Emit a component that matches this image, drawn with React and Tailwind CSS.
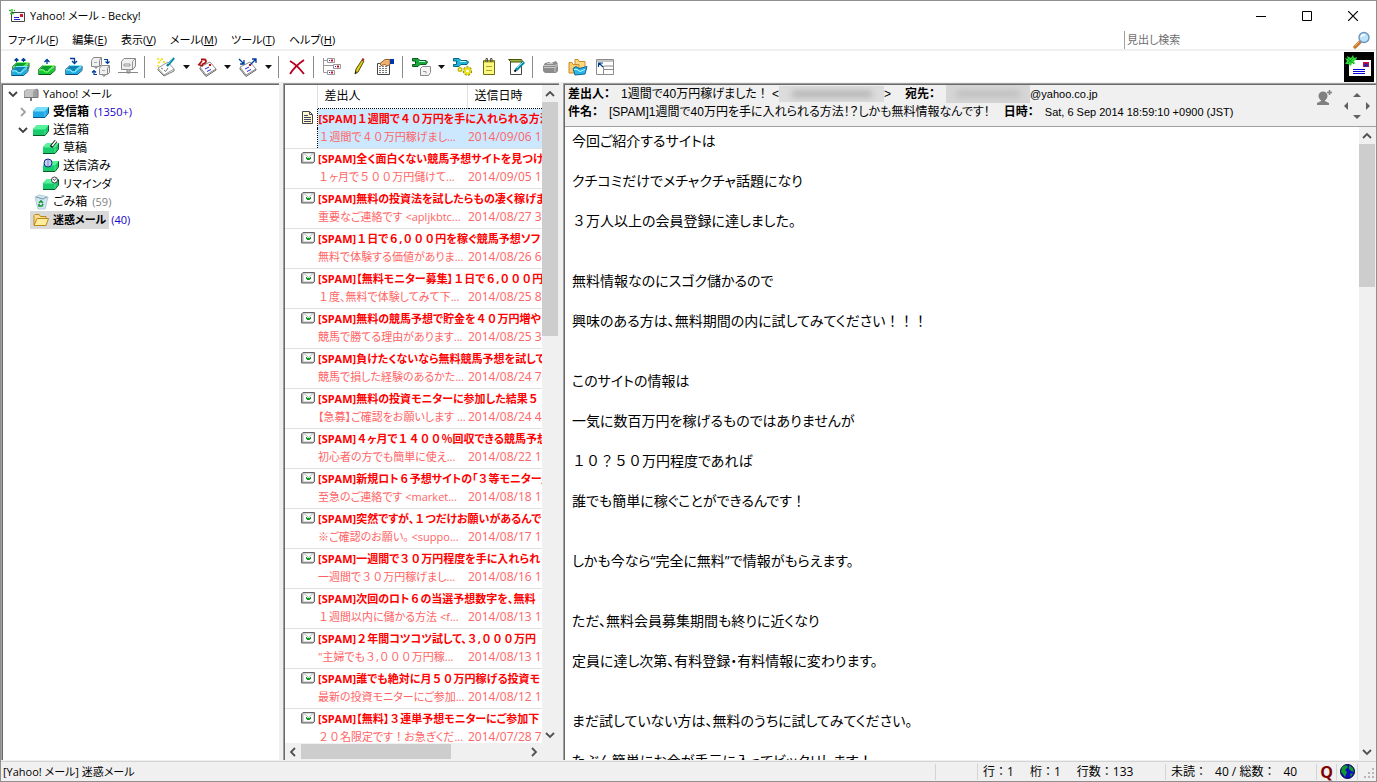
import React, { useState } from "react";

const folders = [
    { name: "Yahoo! メール", level: 0, icon: "mailbox", open: true },
    { name: "受信箱", level: 1, icon: "inbox", open: false, bold: true, count: "(1350+)" },
    { name: "送信箱", level: 1, icon: "outbox", open: true },
    { name: "草稿", level: 2, icon: "draft" },
    { name: "送信済み", level: 2, icon: "sent" },
    { name: "リマインダ", level: 2, icon: "reminder" },
    { name: "ごみ箱", level: 1, icon: "trash", count: "(59)", dim: true },
    { name: "迷惑メール", level: 1, icon: "folder", bold: true, count: "(40)" },
];

const mails = [
    { subject: "[SPAM]１週間で４０万円を手に入れられる方法", from: "１週間で４０万円稼げまし...", date: "2014/09/06 18:59" },
    { subject: "[SPAM]全く面白くない競馬予想サイトを見つけ", from: "１ヶ月で５００万円儲けて...", date: "2014/09/05 12:10" },
    { subject: "[SPAM]無料の投資法を試したらもの凄く稼げま", from: "重要なご連絡です <apljkbtc...", date: "2014/08/27 3:20" },
    { subject: "[SPAM]１日で６,０００円を稼ぐ競馬予想ソフト", from: "無料で体験する価値がありま...", date: "2014/08/26 6:41" },
    { subject: "[SPAM]【無料モニター募集】１日で６,０００円", from: "１度、無料で体験してみて下...", date: "2014/08/25 8:15" },
    { subject: "[SPAM]無料の競馬予想で貯金を４０万円増や", from: "競馬で勝てる理由があります...", date: "2014/08/25 3:02" },
    { subject: "[SPAM]負けたくないなら無料競馬予想を試して", from: "競馬で損した経験のあるかた...", date: "2014/08/24 7:33" },
    { subject: "[SPAM]無料の投資モニターに参加した結果５", from: "【急募】ご確認をお願いします ...", date: "2014/08/24 4:18" },
    { subject: "[SPAM]４ヶ月で１４００％回収できる競馬予想", from: "初心者の方でも簡単に使え...", date: "2014/08/22 10:27" },
    { subject: "[SPAM]新規ロト６予想サイトの「３等モニター」", from: "至急のご連絡です <market...", date: "2014/08/18 11:05" },
    { subject: "[SPAM]突然ですが、１つだけお願いがあるんで", from: "※ご確認のお願い。 <suppo...", date: "2014/08/17 11:48" },
    { subject: "[SPAM]一週間で３０万円程度を手に入れられ", from: "一週間で３０万円稼げまし...", date: "2014/08/16 19:30" },
    { subject: "[SPAM]次回のロト６の当選予想数字を、無料", from: "１週間以内に儲かる方法 <f...", date: "2014/08/13 15:12" },
    { subject: "[SPAM]２年間コツコツ試して、３,０００万円", from: "\"主婦でも３,０００万円稼...", date: "2014/08/13 12:09" },
    { subject: "[SPAM]誰でも絶対に月５０万円稼げる投資モ", from: "最新の投資モニターにご参加...", date: "2014/08/12 19:55" },
    { subject: "[SPAM]【無料】３連単予想モニターにご参加下", from: "２０名限定です！お急ぎくだ...", date: "2014/07/28 7:21" },
];

const bodyLines = [
    "今回ご紹介するサイトは", "",
    "クチコミだけでメチャクチャ話題になり", "",
    "３万人以上の会員登録に達しました。", "", "",
    "無料情報なのにスゴク儲かるので", "",
    "興味のある方は、無料期間の内に試してみてください！！！", "", "",
    "このサイトの情報は", "",
    "一気に数百万円を稼げるものではありませんが", "",
    "１０？５０万円程度であれば", "",
    "誰でも簡単に稼ぐことができるんです！", "", "",
    "しかも今なら“完全に無料”で情報がもらえます。", "", "",
    "ただ、無料会員募集期間も終りに近くなり", "",
    "定員に達し次第、有料登録・有料情報に変わります。", "", "",
    "まだ試していない方は、無料のうちに試してみてください。", "",
    "たぶん簡単にお金が手元に入ってビックリします！",
];

const menus = [
    ["ファイル", "F"], ["編集", "E"], ["表示", "V"], ["メール", "M"], ["ツール", "T"], ["ヘルプ", "H"],
];

// kana is set proportionally, but full-width digits and marks keep their full cell
const Jp = ({ text }) =>
    text.split(/([０-９！？：％]+)/).map((part, i) =>
        i % 2 ? <span key={i} className="[font-feature-settings:normal]">{part}</span> : part
    );

/* ---------- icons ---------- */

const Svg = ({ w = 20, h = 20, children }) => (
    <svg width={w} height={h} viewBox={`0 0 ${w} ${h}`} fill="none" className="shrink-0" aria-hidden="true">
        {children}
    </svg>
);

// open tray, used by the send and receive buttons
const Tray = ({ x = 0, y = 0, light, mid, inner, dark }) => (
    <g transform={`translate(${x} ${y})`}>
        <path d="M1 5.5 5 1.5H16.5L11 5.5 10 7.5H7L5.5 5.5Z" fill={inner} stroke={light} />
        <path d="M1 5.5H5.5L7 7.5H10L11.5 5.5 16.5 2V6L12.5 10.5H1Z" fill={mid} />
        <path d="M1 6H5L7 8H10L12 6 16 3" stroke={light} />
        <path d="M.5 10.5H12.5L17 6.5V2" stroke={dark} />
        <path d="M.5 10.5V5.5L5 1.5" stroke={dark} strokeWidth=".7" />
    </g>
);
const greenTray = { light: "#7cf86c", mid: "#14c838", inner: "#0c9c34", dark: "#045c10" };
const blueTray = { light: "#84e8fc", mid: "#20acdc", inner: "#1084b4", dark: "#045080" };

const Server = ({ x = 0, y = 0 }) => (
    <g transform={`translate(${x} ${y})`} stroke="#888">
        <path d="M.5 3.5 2.5 .5H10.5V7.5L8.5 9.5H.5Z" fill="#f0f0f0" />
        <path d="M8.5 9V3.5L10 1" />
        <path d="M3 5.5H6" stroke="#aaa" />
        <path d="M4 9V11H6V9" fill="#bbb" />
    </g>
);

const Letter = ({ x = 0, y = 0 }) => (
    <g transform={`translate(${x} ${y})`}>
        <path d="M1 6 11 1 17 8 7 14Z" fill="#fff" stroke="#8c8c8c" />
        <path d="M1 7V8L7 15.5 17 9V8" stroke="#666" />
        <path d="M6 8 10 6M8 10.5 12 8.5" stroke="#22d" />
        <path d="M10 4 12 4" stroke="#e00" strokeWidth="2" />
    </g>
);

const Wrench = ({ color, dark }) => (
    <g>
        <path d="M1.5 1.5H7L9 3.5H15L16.5 5 15 7.5H9L7 9.5H1.5V7.5H4.5V4H1.5Z" fill={color} stroke={dark} />
        <path d="M8 4.5H14" stroke="#bfe" />
    </g>
);

const icons = {
    checkAll: (
        <Svg>
            <Tray x={2} y={4} {...greenTray} /><Tray x={1} y={8} {...blueTray} />
            <path d="M6.5 5V1.5M4.5 3.5 6.5 1.5 8.5 3.5M13.5 5V1.5M11.5 3.5 13.5 1.5 15.5 3.5" stroke="#003c9c" strokeWidth="1.2" />
        </Svg>
    ),
    send: (
        <Svg><Tray x={1} y={7} {...greenTray} /><path d="M10 7V2.5M7.5 5 10 2.5 12.5 5" stroke="#003c9c" strokeWidth="1.3" /></Svg>
    ),
    receive: (
        <Svg><Tray x={1} y={7} {...blueTray} /><path d="M6 1.5H10.5V6M8 4 10.5 6.5 13 4" stroke="#003c9c" strokeWidth="1.3" /></Svg>
    ),
    transfer: (
        <Svg>
            <Server /><Server x={8} y={8} />
            <path d="M13 2.5H16.5V6M14.5 4.5 16.5 6.5 18.5 4.5M6 17.5H3V14M1 15.5 3 13.5 5 15.5" stroke="#003c9c" strokeWidth="1.2" />
        </Svg>
    ),
    server: (
        <Svg>
            <path d="M3.5 4.5 6 1.5H17.5V9L15 12.5H3.5Z" fill="#f0f0f0" stroke="#888" /><path d="M14.5 12V4.5L17 2M6 7H12V9H6Z" stroke="#999" />
            <path d="M9 12.5V16H12V12.5" fill="#bbb" stroke="#888" /><path d="M0 15.5H20" stroke="#888" />
        </Svg>
    ),
    compose: (
        <Svg>
            <path d="M2 11 12 5 18 12 8 18Z" fill="#fff" stroke="#999" /><path d="M2 12V13L8 19 18 14V12" stroke="#777" />
            <path d="M8 13 9.5 14.5 12 11M5 11 7 12" stroke="#777" />
            <path d="M18 1 11 9" stroke="#047ba0" strokeWidth="2.4" /><path d="M17 1 12 7" stroke="#6de" />
            <path d="M1 2H3M6 1V3M2 6 4 5M8 4V6M1 9H3M4 3 5 4" stroke="#f4e400" strokeWidth="1.6" />
        </Svg>
    ),
    reply: (
        <Svg>
            <Letter x={2} y={4} />
            <path d="M4 2.5H8Q10 4 8 6L5 7.5M5 4 2 7.5 6 9" stroke="#b01010" strokeWidth="1.8" />
        </Svg>
    ),
    forward: (
        <Svg>
            <Letter x={1} y={4} />
            <path d="M1 2 6 7M2 7H6V3M12 8 18 2M14 2H18V6" stroke="#003c9c" strokeWidth="1.3" />
        </Svg>
    ),
    remove: (
        <Svg><path d="M3 4Q10 8 17 17M17 3Q8 9 3 17" stroke="#b4001e" strokeWidth="1.8" /></Svg>
    ),
    thread: (
        <Svg>
            <path d="M1.5 1V15.5H6M2 8.5H11M2 3.5H5" stroke="#999" />
            <path d="M5.5 1.5H12.5V5.5H5.5ZM11.5 7.5H18.5V11.5H11.5ZM5.5 13.5H12.5V17.5H5.5Z" fill="#fff" stroke="#999" />
            <path d="M9 3.5H11M15 9.5H17M9 15.5H11" stroke="#e00020" strokeWidth="2" />
            <path d="M7 3.5H8M13 9.5H14M7 15.5H8" stroke="#22c" />
        </Svg>
    ),
    pencil: (
        <Svg>
            <path d="M6 17 7 12 13 3 15 4 9 15Z" fill="#e4d020" stroke="#554a00" /><path d="M13 2 15 3" stroke="#a03030" strokeWidth="2.4" />
            <path d="M6 17V14L8 15Z" fill="#222" />
        </Svg>
    ),
    properties: (
        <Svg>
            <path d="M1.5 6.5H13.5V17.5H1.5Z" fill="#fff" stroke="#444" />
            <path d="M3 9.5H12M3 11.5H12M3 13.5H12M3 15.5H12" stroke="#777" strokeDasharray="2 1" />
            <path d="M4 6.5 9 2.5H14V7.5L11 9 9 7.5 5 8.5Z" fill="#f0b070" stroke="#9a6430" /><path d="M14 2H18V7H14Z" fill="#0036a8" />
        </Svg>
    ),
    settings: (
        <Svg>
            <Wrench color="#18a838" dark="#065c18" />
            <path d="M9.5 11.5 11.5 9.5H19.5V15.5L17.5 18.5H9.5Z" fill="#f4f4f4" stroke="#888" /><path d="M12 14.5H15V16.5" stroke="#999" />
        </Svg>
    ),
    accountSettings: (
        <Svg>
            <Wrench color="#20b4dc" dark="#066484" />
            <circle cx="15.5" cy="14" r="3.5" stroke="#8e8600" strokeWidth="2.4" strokeDasharray="2 1" />
            <circle cx="15.5" cy="14" r="2.6" fill="#fff" stroke="#e6dc10" strokeWidth="2.2" />
            <circle cx="8" cy="12.5" r="1.7" stroke="#c4ba00" strokeWidth="1.6" />
        </Svg>
    ),
    notepad: (
        <Svg>
            <path d="M4.5 3.5H15.5V17.5H4.5Z" fill="#fff880" stroke="#6c6c10" /><path d="M5 4.5H15" stroke="#b0a820" strokeWidth="2" />
            <path d="M7 9.5H13M7 13.5H13" stroke="#a8a030" />
            <path d="M7 5V1.5H8.5V5M11.5 5V1.5H13V5" stroke="#555" />
        </Svg>
    ),
    edit: (
        <Svg>
            <path d="M4.5 4.5H15.5V17.5H4.5Z" fill="#fff" stroke="#444" /><path d="M2.5 2.5H15.5L17 5H5Z" fill="#9cb838" stroke="#445410" />
            <path d="M18 5 10 13" stroke="#0488a4" strokeWidth="2.8" /><path d="M17 5 11 11" stroke="#8ef" /><path d="M8.5 14.5 10 13" stroke="#000" strokeWidth="2" />
        </Svg>
    ),
    archive: (
        <Svg>
            <path d="M2 9 4 6 8 5 10 6 15 4 17 7V14L15 16H4L2 14Z" fill="#8c8c8c" />
            <path d="M2 8.5H14L17 7M6 6.5H12M3 10.5H14V15M14 10.5 17 8.5" stroke="#c8c8c8" />
        </Svg>
    ),
    folders: (
        <Svg>
            <path d="M7 2.5H10L11 4.5H17V12H7Z" fill="#ffd880" stroke="#c88c28" /><path d="M1 5.5H4L5 7.5H11V16H1Z" fill="#ffcc68" stroke="#c88c28" />
            <path d="M5 11.5 8 9.5 11 11.5 19 9.5 17 17 7 18Z" fill="#2cb4e4" stroke="#0868a0" /><path d="M6 12.5H9L12 14.5 17 12.5" stroke="#bff" />
        </Svg>
    ),
    layout: (
        <Svg>
            <path d="M1.5 2.5H18.5V17.5H1.5Z" fill="#fff" stroke="#8c8c8c" /><path d="M9 9H18M9 12.5H18M8.5 17V9" stroke="#8c8c8c" />
            <path d="M1 4H19" stroke="#8c8c8c" /><path d="M3.5 10V6H8M4 6 8 10" stroke="#003c8c" strokeWidth="1.2" />
        </Svg>
    ),
};

const FolderBox = ({ light, mid, dark, children }) => (
    <Svg w={16} h={16}>
        <path d="M0 7 4 3H16V8L12 13H0Z" fill={mid} />
        <path d="M0 7.5 4 3H16L12 7.5Z" fill={light} />
        <path d="M12 8V12.5" stroke={light} strokeWidth=".7" />
        <path d="M0 13.5H12L15.5 9V3.5" stroke={dark} />
        {children}
    </Svg>
);
const greenBox = { light: "#58f49c", mid: "#18cc6c", dark: "#055c28" };

const folderIcons = {
    mailbox: (
        <Svg w={16} h={16}>
            <path d="M1 5 4 3H14L15 5V11H1Z" fill="#a0a0a0" /><path d="M2 5 5 3H12L10 6V11H2Z" fill="#c4c4c4" />
            <path d="M1 11.5H15V4L13.5 3" stroke="#777" /><path d="M7 12H9V15H7Z" fill="#777" />
        </Svg>
    ),
    inbox: <FolderBox light="#78dcfc" mid="#20a8e4" dark="#085890" />,
    outbox: <FolderBox {...greenBox} />,
    draft: (
        <FolderBox {...greenBox}><path d="M13 1 8 7" stroke="#111" strokeWidth="3.2" /><path d="M13 1 9 6" stroke="#fff" strokeWidth="1.6" /></FolderBox>
    ),
    sent: (
        <FolderBox {...greenBox}>
            <circle cx="5" cy="5" r="4" fill="#fff" stroke="#0a2090" />
            <path d="M1 5H9M5 1V9M2 3H8M2 7H8" stroke="#4060c0" strokeWidth=".6" />
        </FolderBox>
    ),
    reminder: (
        <FolderBox {...greenBox}><circle cx="11.5" cy="4" r="3" fill="#fff" stroke="#444" /><path d="M10 3 11.5 4.5 13 2.5" stroke="#222" strokeWidth=".8" /></FolderBox>
    ),
    trash: (
        <Svg w={16} h={16}>
            <path d="M2 3 6 1 15 3 12 15H5Z" fill="#d0e6f0" stroke="#b0ccd8" /><path d="M3 3 10 5 14 3" stroke="#7894a4" />
            <path d="M6 9 8 7 10 9M10 10 9 12H6V10" stroke="#1c9438" strokeWidth="1.6" />
        </Svg>
    ),
    folder: (
        <Svg w={16} h={16}>
            <path d="M1 13V3.5L2 2.5H6L7.5 4.5H13V7" fill="#ffe08c" stroke="#b88818" />
            <path d="M1 13.5 4 6.5H15.5L13 13.5Z" fill="#ffec9c" stroke="#b88818" />
        </Svg>
    ),
};

const AppIcon = () => (
    <Svg w={16} h={14}>
        <path d="M2.5 3.5H15.5V12.5H2.5Z" fill="#fff" stroke="#444" />
        <path d="M5 8.5H10M5 10.5H11" stroke="#22c" /><path d="M11 5H14V8H11Z" fill="#e01030" />
        <path d="M0 1.5H2M3 0V3M5 1.5H6M1 4.5H5" stroke="#30c030" strokeWidth="1.4" />
    </Svg>
);

const LogoIcon = () => (
    <Svg w={30} h={30}>
        <path d="M0 0H30V30H0Z" fill="#000" />
        <path d="M5 8H27V24H5Z" fill="#fff" />
        <path d="M9 17.5H21M9 19.5H21M9 21.5H21" stroke="#00d" />
        <path d="M19 10H25V15H19Z" fill="#d01028" /><path d="M20 14 22 11 24 14Z" fill="#22c" stroke="#22c" />
        <path d="M1 6 4 7 3 4 7 6 9 3 10 6 13 5 12 8 10 9 11 12 8 11 7 14 4 12 1 12 3 9Z" fill="#2ed838" />
        <path d="M3 6 10 12M4 11 9 6" stroke="#0c8c18" strokeWidth=".8" />
    </Svg>
);

const MailIcon = () => (
    <Svg w={14} h={12}>
        <path d="M.5 2 2 .5H13.5V9.5L12 11H.5Z" fill="#b0b0b0" stroke="#666" />
        <path d="M2.5 1.5H12.5V9.5H2.5Z" fill="#fff" />
        <path d="M3 1.5 7.5 5.5 12 1.5" stroke="#b4b4b4" /><path d="M5 5H6V6H9V5H10V7H9V8H6V7H5Z" fill="#0a9c20" />
    </Svg>
);

const PageIcon = () => (
    <Svg w={13} h={13}>
        <path d="M1.5 .5H8.5L11.5 3.5V12.5H1.5Z" fill="#fffbd0" stroke="#444" />
        <path d="M8.5 1V3.5H11M3 4.5H7M3 6.5H10M3 8.5H10M3 10.5H10" stroke="#446" />
    </Svg>
);

const chevrons = {
    up: "M1 7 5 3 9 7",
    down: "M1 3 5 7 9 3",
    left: "M7 1 3 5 7 9",
    right: "M3 1 7 5 3 9",
};
const Chevron = ({ dir, color = "#505050" }) => (
    <Svg w={10} h={10}><path d={chevrons[dir]} stroke={color} strokeWidth="1.8" /></Svg>
);

const Search = () => (
    <Svg w={18} h={18}>
        <path d="M2 16 7 11" stroke="#c47830" strokeWidth="3.4" strokeLinecap="round" />
        <path d="M2 15 6 11" stroke="#f0b470" strokeLinecap="round" />
        <circle cx="11" cy="6.5" r="5" fill="#bfe4fa" stroke="#6c94c0" strokeWidth="1.4" /><path d="M8 6Q9 3 12 4" stroke="#fff" strokeWidth="1.6" />
    </Svg>
);

/* ---------- parts ---------- */

const Pane = ({ className, children }) => (
    <div className={`border-t border-l border-[#a0a0a0] min-h-0 min-w-0 ${className}`}>
        <div className="h-full w-full flex flex-col border-t border-l border-[#696969] bg-white">{children}</div>
    </div>
);

const VScroll = ({ thumb }) => (
    <div className="w-[17px] shrink-0 flex flex-col bg-[#f0f0f0]">
        <button aria-label="上へ" className="h-[17px] w-4 flex items-center justify-center"><Chevron dir="up" /></button>
        <div className="flex-1 min-h-0"><div className={`w-4 bg-[#cdcdcd] ${thumb}`} /></div>
        <button aria-label="下へ" className="h-[17px] w-4 flex items-center justify-center"><Chevron dir="down" /></button>
    </div>
);

const Tool = ({ name, label, menu }) => (
    <div className="flex">
        <button aria-label={label} className="w-[27px] h-[28px] flex items-center justify-center hover:bg-[#e5f3ff]">{icons[name]}</button>
        {menu && (
            <button aria-label={`${label}メニュー`} className="w-[14px] flex items-center justify-center">
                <Svg w={7} h={4}><path d="M0 0H7L3.5 4Z" fill="#111" /></Svg>
            </button>
        )}
    </div>
);

const Divider = () => (
    <div className="w-2 h-[22px] pl-[3px]"><div className="w-px h-full bg-[#8c8c8c]" /></div>
);

const StatusCell = ({ className, children }) => (
    <div className={`flex items-center border-l border-[#d4d4d4] h-4 whitespace-pre ${className}`}>{children}</div>
);

export default function App() {
    const [selectedMail, setSelectedMail] = useState(0);
    const [selectedFolder, setSelectedFolder] = useState(7);

    return (
        <div className="h-screen flex flex-col overflow-hidden border border-[#8f8f8f] bg-white text-black text-[12px] leading-[18px] font-['Open_Sans','Noto_Sans_CJK_JP',sans-serif] [font-feature-settings:'palt']">
            {/* Title bar */}
            <header className="h-[30px] shrink-0 flex items-center pl-2">
                <AppIcon />
                <h1 className="pl-[5px] flex-1 text-[11px]">Yahoo! メール - Becky!</h1>
                <button aria-label="最小化" className="w-[46px] h-full flex items-center justify-center">
                    <Svg w={10} h={10}><path d="M0 5.5H10" stroke="#000" /></Svg>
                </button>
                <button aria-label="最大化" className="w-[46px] h-full flex items-center justify-center">
                    <Svg w={10} h={10}><path d="M.5 .5H9.5V9.5H.5Z" stroke="#000" /></Svg>
                </button>
                <button aria-label="閉じる" className="w-[46px] h-full flex items-center justify-center">
                    <Svg w={10} h={10}><path d="M0 0 10 10M10 0 0 10" stroke="#000" strokeWidth="1.2" /></Svg>
                </button>
            </header>

            {/* Menu bar */}
            <div className="h-[18px] shrink-0 flex items-center justify-between">
                <nav className="flex gap-[14px] pl-[7px] text-[11px]">
                    {menus.map(([name, key]) => (
                        <button key={key}>{name}(<span className="underline">{key}</span>)</button>
                    ))}
                </nav>
                <label className="w-[252px] h-full flex items-center border-l border-[#a0a0a0]">
                    <input
                        type="text"
                        aria-label="見出し検索"
                        placeholder="見出し検索"
                        className="flex-1 min-w-0 pl-[2px] text-[11px] outline-none placeholder:text-[#6d6d6d]"
                    />
                    <span className="pr-[5px]"><Search /></span>
                </label>
            </div>

            {/* Toolbar */}
            <div className="h-[33px] shrink-0 flex items-center border-t-2 border-[#f0f0f0] pl-[5px]">
                <Tool name="checkAll" label="送受信" />
                <Tool name="send" label="送信" />
                <Tool name="receive" label="受信" />
                <Tool name="transfer" label="全送受信" />
                <Tool name="server" label="リモート" />
                <Divider />
                <div className="flex pl-[3px]">
                    <Tool name="compose" label="新規作成" menu />
                    <Tool name="reply" label="返信" menu />
                    <Tool name="forward" label="転送" menu />
                </div>
                <Divider />
                <Tool name="remove" label="削除" />
                <Divider />
                <Tool name="thread" label="スレッド" />
                <Tool name="pencil" label="マーク" />
                <Tool name="properties" label="プロパティ" />
                <Divider />
                <Tool name="settings" label="設定" menu />
                <Tool name="accountSettings" label="全般設定" />
                <Tool name="notepad" label="メモ" />
                <Tool name="edit" label="編集" />
                <Divider />
                <Tool name="archive" label="アーカイブ" />
                <Tool name="folders" label="フォルダ" />
                <Tool name="layout" label="レイアウト" />
                <div className="flex-1 flex justify-end pr-[2px]"><LogoIcon /></div>
            </div>

            <main className="flex-1 min-h-0 flex gap-1 py-px bg-[#f0f0f0]">
                {/* Folder tree */}
                <Pane className="w-[278px] shrink-0">
                    <ul>
                        {folders.map((f, i) => (
                            <li
                                key={f.name}
                                className={`h-[18px] flex items-center ${f.level === 0 ? "pl-[3px]" : f.level === 1 ? "pl-[13px]" : "pl-[23px]"}`}
                            >
                                <span className="w-[14px] flex justify-center">
                                    {f.open !== undefined && <Chevron dir={f.open ? "down" : "right"} color={f.open ? "#404040" : "#a0a0a0"} />}
                                </span>
                                <button
                                    onClick={() => setSelectedFolder(i)}
                                    className={`h-[18px] flex items-center gap-1 px-[3px] ${/[ァ-ヶ]/.test(f.name) ? "text-[11px]" : ""} ${f.bold ? "font-bold" : ""} ${i === selectedFolder ? "bg-[#d9d9d9]" : ""}`}
                                >
                                    {folderIcons[f.icon]}
                                    {f.name}
                                </button>
                                {f.count && <span className={`pl-[2px] text-[11px] ${f.dim ? "text-[#808080]" : "text-[#1400c8]"}`}>{f.count}</span>}
                            </li>
                        ))}
                    </ul>
                </Pane>

                {/* Message list */}
                <Pane className="w-[276px] shrink-0">
                    <div className="flex-1 min-h-0 flex">
                        <div className="flex-1 min-w-0 overflow-hidden">
                            <table className="w-full table-fixed border-collapse whitespace-nowrap">
                                <colgroup>
                                    <col className="w-8" />
                                    <col className="w-[150px]" />
                                    <col />
                                </colgroup>
                                <thead>
                                    <tr className="h-[23px] text-left">
                                        <th aria-label="状態" />
                                        <th className="font-normal pl-[7px] border-l border-[#e0e0e0]">差出人</th>
                                        <th className="font-normal pl-[7px] border-l border-[#e0e0e0]">送信日時</th>
                                    </tr>
                                </thead>
                                {mails.map((m, i) => {
                                    const on = i === selectedMail;
                                    return (
                                        <tbody key={m.date} onClick={() => setSelectedMail(i)} className="border-b border-[#e0e0e0]">
                                            <tr className="h-5">
                                                <td rowSpan={2} className="align-top pt-[3px] pl-4">{i === 0 ? <PageIcon /> : <MailIcon />}</td>
                                                <td colSpan={2} className={`overflow-hidden p-0 pl-px align-bottom text-[11px] font-bold text-[#f00] ${on ? "bg-[#cce8ff] border-t border-l border-dotted border-black" : ""}`}><Jp text={m.subject} /></td>
                                            </tr>
                                            <tr className={`h-5 align-top text-[#ff6464] ${on ? "bg-[#cce8ff] border-b border-dotted border-black" : ""}`}>
                                                <td className={`overflow-hidden p-0 pl-px text-[11px] ${on ? "border-l border-dotted border-black" : ""}`}><Jp text={m.from} /></td>
                                                <td className="overflow-hidden p-0 pl-px">{m.date}</td>
                                            </tr>
                                        </tbody>
                                    );
                                })}
                            </table>
                        </div>
                        <VScroll thumb="h-[234px]" />
                    </div>
                    <div className="h-[17px] shrink-0 flex items-center bg-[#f0f0f0] pr-[17px]">
                        <button aria-label="左へ" className="w-4 h-full flex items-center justify-center"><Chevron dir="left" /></button>
                        <div className="flex-1 h-[15px]"><div className="h-full w-[150px] bg-[#cdcdcd]" /></div>
                        <button aria-label="右へ" className="w-[17px] h-full flex items-center justify-center"><Chevron dir="right" /></button>
                    </div>
                </Pane>

                {/* Message view */}
                <Pane className="flex-1">
                    <div className="h-[42px] shrink-0 flex justify-between bg-[#f0f0f0] border-b border-[#a0a0a0] pl-[3px] font-['Liberation_Sans','Noto_Sans_CJK_JP',sans-serif] whitespace-nowrap">
                        <div>
                            <div className="flex items-center h-[18px]">
                                <b className="pr-[11px]">差出人：</b>
                                <span><Jp text="1週間で40万円稼げました！" />&nbsp;&lt;</span>
                                <span className="w-[105px] h-4 overflow-hidden bg-[#dcdcdc] flex items-center justify-center">
                                    <span className="w-20 h-[6px] bg-[#b0b0b0] blur-[3px]" />
                                </span>
                                <span>&gt;</span>
                                <b className="pl-[14px] pr-[11px]">宛先：</b>
                                <span className="w-[84px] h-[18px] overflow-hidden bg-[#d6d6d6] flex items-center justify-center">
                                    <span className="w-16 h-[6px] bg-[#bcbcbc] blur-[3px]" />
                                </span>
                                <span className="text-[11px]">@yahoo.co.jp</span>
                            </div>
                            <div className="flex items-center h-[18px]">
                                <b className="pr-[11px]">件名：</b>
                                <span>[SPAM]1週間で40万円を手に入れられる方法！？しかも無料情報なんです！</span>
                                <b className="pl-[14px] pr-[11px]">日時：</b>
                                <span className="text-[11px]">Sat, 6 Sep 2014 18:59:10 +0900 (JST)</span>
                            </div>
                        </div>
                        <div className="flex items-center gap-[10px] pr-[5px]">
                            <button aria-label="アドレス帳に追加" className="pb-4">
                                <Svg w={17} h={17}>
                                    <circle cx="7" cy="7" r="4.5" fill="#808080" /><path d="M5 10H9V12L13 14V16H1V14L5 12Z" fill="#808080" />
                                    <path d="M13.5 1V6M11 3.5H16" stroke="#808080" strokeWidth="1.6" />
                                </Svg>
                            </button>
                            <button aria-label="メッセージ移動">
                                <Svg w={28} h={28}>
                                    <path d="M10 5 14 1 18 5ZM10 23 14 27 18 23ZM5 10 1 14 5 18ZM23 10 27 14 23 18Z" fill="#606060" />
                                </Svg>
                            </button>
                        </div>
                    </div>
                    <div className="flex-1 min-h-0 flex">
                        <article className="flex-1 min-w-0 overflow-hidden pt-1 pl-[7px] text-[14px] leading-5">
                            {bodyLines.map((line, i) => <p key={i} className="h-5 whitespace-nowrap"><Jp text={line} /></p>)}
                        </article>
                        <VScroll thumb="h-[143px]" />
                    </div>
                </Pane>
            </main>

            {/* Status bar */}
            <footer className="h-5 shrink-0 flex items-center bg-[#f0f0f0] border-t border-[#d4d4d4]">
                <div className="flex-1 pl-[2px] text-[11px]">[Yahoo! メール] 迷惑メール</div>
                <StatusCell className="w-[42px]" />
                <StatusCell className="w-[188px] pl-[5px] gap-4">
                    <span><Jp text="行：1" /></span><span><Jp text="桁：1" /></span><span><Jp text="行数：133" /></span>
                </StatusCell>
                <StatusCell className="w-[151px] pl-[5px] gap-2">
                    <span><Jp text="未読：" /></span><span><Jp text="40 / 総数：" /></span><span>40</span>
                </StatusCell>
                <StatusCell className="w-5 justify-center">
                    <b className="text-[16px] text-[#800000]">Q</b>
                </StatusCell>
                <StatusCell className="w-[21px] justify-center">
                    <Svg w={15} h={15}>
                        <circle cx="7.5" cy="7.5" r="7" fill="#0c0cc0" stroke="#000040" />
                        <path d="M2 3 6 1 8 3 5 6 7 8 5 13 3 10 1 8ZM9 1 13 4 14 8 11 7 9 5ZM10 10 13 9 11 13Z" fill="#109c28" />
                    </Svg>
                </StatusCell>
                <StatusCell className="w-[19px] justify-end pt-1">
                    <Svg w={12} h={12}>
                        <path d="M8 0H10V2H8ZM4 4H6V6H4ZM8 4H10V6H8ZM0 8H2V10H0ZM4 8H6V10H4ZM8 8H10V10H8Z" fill="#b8b8b8" />
                    </Svg>
                </StatusCell>
            </footer>
        </div>
    );
}
